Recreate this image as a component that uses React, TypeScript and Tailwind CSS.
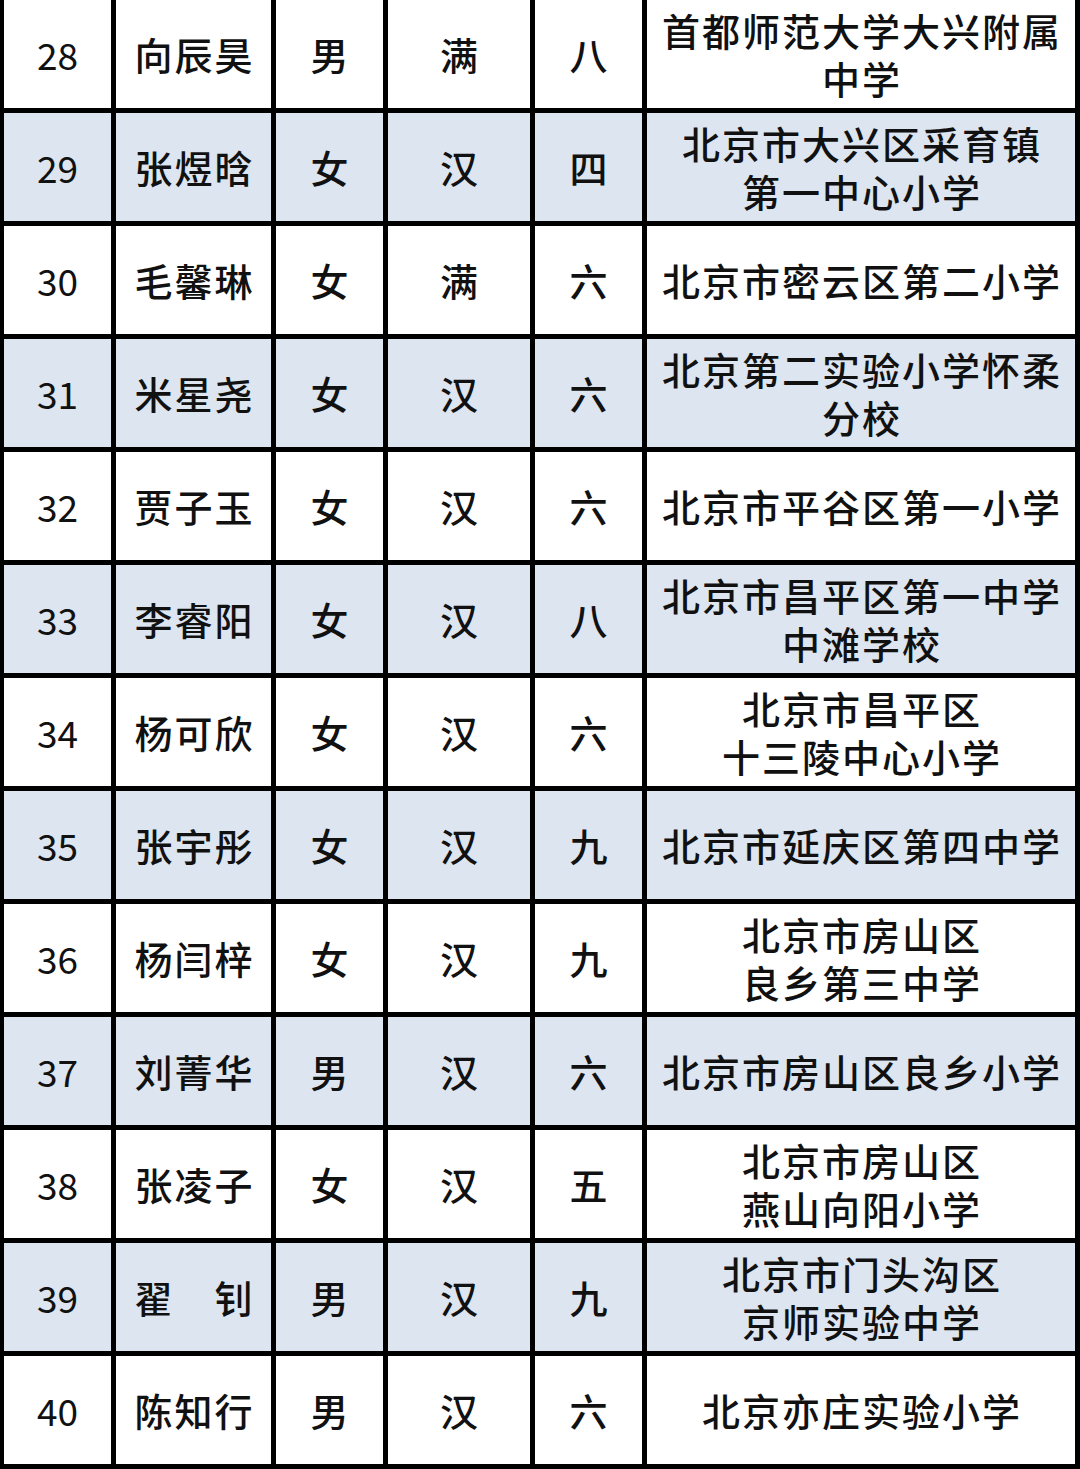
import React from "react";

type Row = { no: string; name: string; sex: string; nation: string; grade: string; school: string[] };

const rows: Row[] = [
  { no: "28", name: "向辰昊", sex: "男", nation: "满", grade: "八", school: ["首都师范大学大兴附属", "中学"] },
  { no: "29", name: "张煜晗", sex: "女", nation: "汉", grade: "四", school: ["北京市大兴区采育镇", "第一中心小学"] },
  { no: "30", name: "毛馨琳", sex: "女", nation: "满", grade: "六", school: ["北京市密云区第二小学"] },
  { no: "31", name: "米星尧", sex: "女", nation: "汉", grade: "六", school: ["北京第二实验小学怀柔", "分校"] },
  { no: "32", name: "贾子玉", sex: "女", nation: "汉", grade: "六", school: ["北京市平谷区第一小学"] },
  { no: "33", name: "李睿阳", sex: "女", nation: "汉", grade: "八", school: ["北京市昌平区第一中学", "中滩学校"] },
  { no: "34", name: "杨可欣", sex: "女", nation: "汉", grade: "六", school: ["北京市昌平区", "十三陵中心小学"] },
  { no: "35", name: "张宇彤", sex: "女", nation: "汉", grade: "九", school: ["北京市延庆区第四中学"] },
  { no: "36", name: "杨闫梓", sex: "女", nation: "汉", grade: "九", school: ["北京市房山区", "良乡第三中学"] },
  { no: "37", name: "刘菁华", sex: "男", nation: "汉", grade: "六", school: ["北京市房山区良乡小学"] },
  { no: "38", name: "张凌子", sex: "女", nation: "汉", grade: "五", school: ["北京市房山区", "燕山向阳小学"] },
  { no: "39", name: "翟　钊", sex: "男", nation: "汉", grade: "九", school: ["北京市门头沟区", "京师实验中学"] },
  { no: "40", name: "陈知行", sex: "男", nation: "汉", grade: "六", school: ["北京亦庄实验小学"] },
];

function Cell({ blue, children }: { blue: boolean; children: React.ReactNode }) {
  return (
    <div
      className={
        "flex flex-col items-center justify-center text-center text-[38px] leading-[48px] tracking-[2px] font-medium text-[#111111] " +
        (blue ? "bg-[#dce5f0]" : "bg-white")
      }
    >
      {children}
    </div>
  );
}

function Line({ children }: { children: React.ReactNode }) {
  return <div className="mr-[-2px] h-[48px] whitespace-nowrap">{children}</div>;
}

export default function App() {
  return (
    <div
      className="w-[1080px] h-[1469px] bg-black pl-[4px] pr-[5px] pb-[5px] grid grid-cols-[107px_155px_107px_142px_107px_428px] grid-rows-[repeat(13,108px)] gap-[5px]"
      style={{ fontFamily: '"Noto Sans CJK SC", "Noto Sans", sans-serif' }}
    >
      {rows.map((r, i) => {
        const blue = i % 2 === 1;
        return (
          <React.Fragment key={r.no}>
            <Cell blue={blue}>
              <div className="h-[48px] tracking-normal font-normal text-[37px]">{r.no}</div>
            </Cell>
            <Cell blue={blue}>
              <Line>{r.name}</Line>
            </Cell>
            <Cell blue={blue}>
              <Line>{r.sex}</Line>
            </Cell>
            <Cell blue={blue}>
              <Line>{r.nation}</Line>
            </Cell>
            <Cell blue={blue}>
              <Line>{r.grade}</Line>
            </Cell>
            <Cell blue={blue}>
              {r.school.map((s) => (
                <Line key={s}>{s}</Line>
              ))}
            </Cell>
          </React.Fragment>
        );
      })}
    </div>
  );
}
